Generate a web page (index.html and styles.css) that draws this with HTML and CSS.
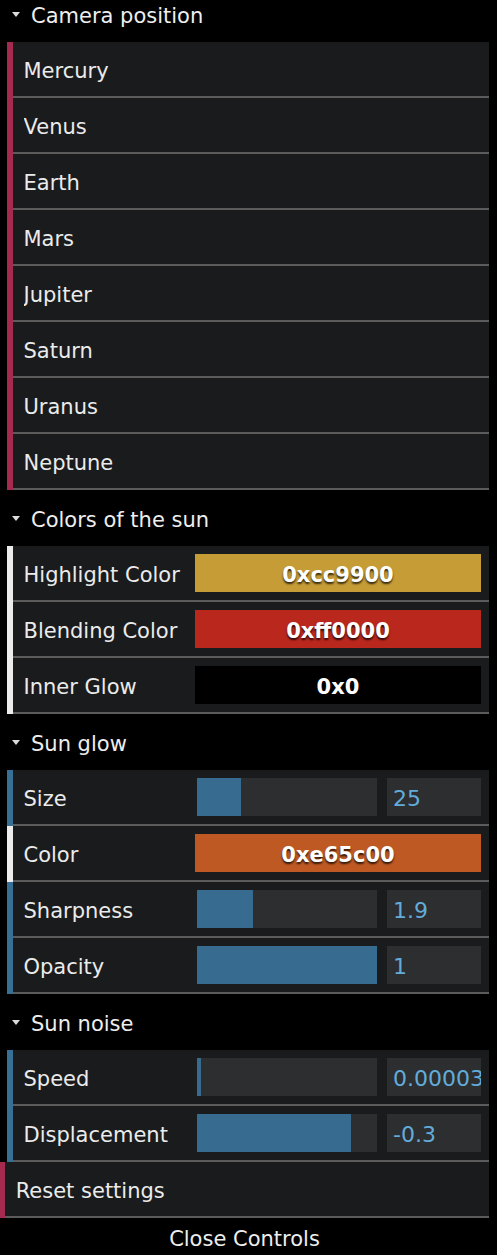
FILE: index.html
```html
<!DOCTYPE html>
<html>
<head>
<meta charset="utf-8">
<link rel="stylesheet" href="styles.css">
</head>
<body>
<div class="gui">
  <div class="folder">
    <div class="title"><span class="arrow"></span><span class="ttext">Camera position</span></div>
    <div class="rows">
      <div class="row fn"><span class="label">Mercury</span></div>
      <div class="row fn"><span class="label">Venus</span></div>
      <div class="row fn"><span class="label">Earth</span></div>
      <div class="row fn"><span class="label">Mars</span></div>
      <div class="row fn"><span class="label">Jupiter</span></div>
      <div class="row fn"><span class="label">Saturn</span></div>
      <div class="row fn"><span class="label">Uranus</span></div>
      <div class="row fn"><span class="label">Neptune</span></div>
    </div>
  </div>
  <div class="folder">
    <div class="title"><span class="arrow"></span><span class="ttext">Colors of the sun</span></div>
    <div class="rows">
      <div class="row col"><span class="label">Highlight Color</span><div class="swatch c-high">0xcc9900</div></div>
      <div class="row col"><span class="label">Blending Color</span><div class="swatch c-blend">0xff0000</div></div>
      <div class="row col"><span class="label">Inner Glow</span><div class="swatch c-inner">0x0</div></div>
    </div>
  </div>
  <div class="folder">
    <div class="title"><span class="arrow"></span><span class="ttext">Sun glow</span></div>
    <div class="rows">
      <div class="row num"><span class="label">Size</span><div class="ctrl"><div class="slider"><div class="fill" style="width:24.4%"></div></div><div class="value">25</div></div></div>
      <div class="row col"><span class="label">Color</span><div class="swatch c-glow">0xe65c00</div></div>
      <div class="row num"><span class="label">Sharpness</span><div class="ctrl"><div class="slider"><div class="fill" style="width:31%"></div></div><div class="value">1.9</div></div></div>
      <div class="row num"><span class="label">Opacity</span><div class="ctrl"><div class="slider"><div class="fill" style="width:100%"></div></div><div class="value">1</div></div></div>
    </div>
  </div>
  <div class="folder">
    <div class="title"><span class="arrow"></span><span class="ttext">Sun noise</span></div>
    <div class="rows">
      <div class="row num"><span class="label">Speed</span><div class="ctrl"><div class="slider"><div class="fill" style="width:2.2%"></div></div><div class="value">0.00003</div></div></div>
      <div class="row num"><span class="label">Displacement</span><div class="ctrl"><div class="slider"><div class="fill" style="width:85.5%"></div></div><div class="value">-0.3</div></div></div>
    </div>
  </div>
  <div class="row fn top"><span class="label">Reset settings</span></div>
  <div class="close"><span class="ttext">Close Controls</span></div>
</div>
</body>
</html>
```
FILE: styles.css
```css
html, body {
  margin: 0;
  padding: 0;
  background: #000;
  overflow: hidden;
}
body {
  width: 497px;
  height: 1255px;
}
.gui {
  width: 489px;
  margin-top: -14px;
  background: #000;
  color: #ebebeb;
  font-family: "DejaVu Sans", sans-serif;
  font-size: 21px;
}
.title {
  height: 56px;
  display: flex;
  align-items: center;
  padding-left: 12px;
  background: #000;
  color: #eeeeee;
}
.ttext {
  padding-top: 4px;
}
.arrow {
  width: 0;
  height: 0;
  border-left: 4.5px solid transparent;
  border-right: 4.5px solid transparent;
  border-top: 5px solid #dcdcdc;
  margin-right: 11px;
  margin-top: 1px;
}
.rows {
  padding-left: 7px;
  display: flex;
  flex-direction: column;
}
.row {
  height: 56px;
  display: flex;
  align-items: center;
  padding-left: 10.5px;
  padding-right: 8px;
  padding-bottom: 2px;
  box-sizing: border-box;
  border-left: 6px solid #a52a4f;
  background: linear-gradient(#5b5b5b, #5b5b5b) left bottom / 100% 2px no-repeat, #1a1b1d;
}
.row.fn { border-left-color: #a52a4f; }
.row.col { border-left-color: #ececec; }
.row.num { border-left-color: #386f94; }
.row.top { border-left-width: 5px; padding-left: 10.7px; }
.label {
  flex: 1;
  white-space: nowrap;
  overflow: hidden;
  padding-top: 4px;
}
.swatch {
  width: 286px;
  height: 38px;
  box-sizing: border-box;
  padding-top: 3px;
  display: flex;
  align-items: center;
  justify-content: center;
  font-weight: bold;
  color: #fff;
  text-shadow: rgba(0, 0, 0, 0.75) 0 2px 2px;
}
.c-high { background: #c69c36; }
.c-blend { background: #ba271d; }
.c-inner { background: #000; }
.c-glow { background: #bf5923; }
.ctrl {
  width: 286px;
  height: 38px;
  display: flex;
}
.slider {
  margin-left: 2px;
  width: 180px;
  height: 38px;
  background: #2d2e30;
}
.fill {
  height: 100%;
  background: #376c90;
}
.value {
  margin-left: 10px;
  width: 94px;
  height: 38px;
  box-sizing: border-box;
  padding-left: 6px;
  padding-top: 3px;
  background: #2d2e30;
  color: #62acda;
  font-size: 22px;
  display: flex;
  align-items: center;
  white-space: nowrap;
  overflow: hidden;
}
.close {
  height: 40px;
  display: flex;
  align-items: center;
  justify-content: center;
  background: #000;
  color: #eeeeee;
}
.close .ttext {
  padding-top: 2px;
}
```
